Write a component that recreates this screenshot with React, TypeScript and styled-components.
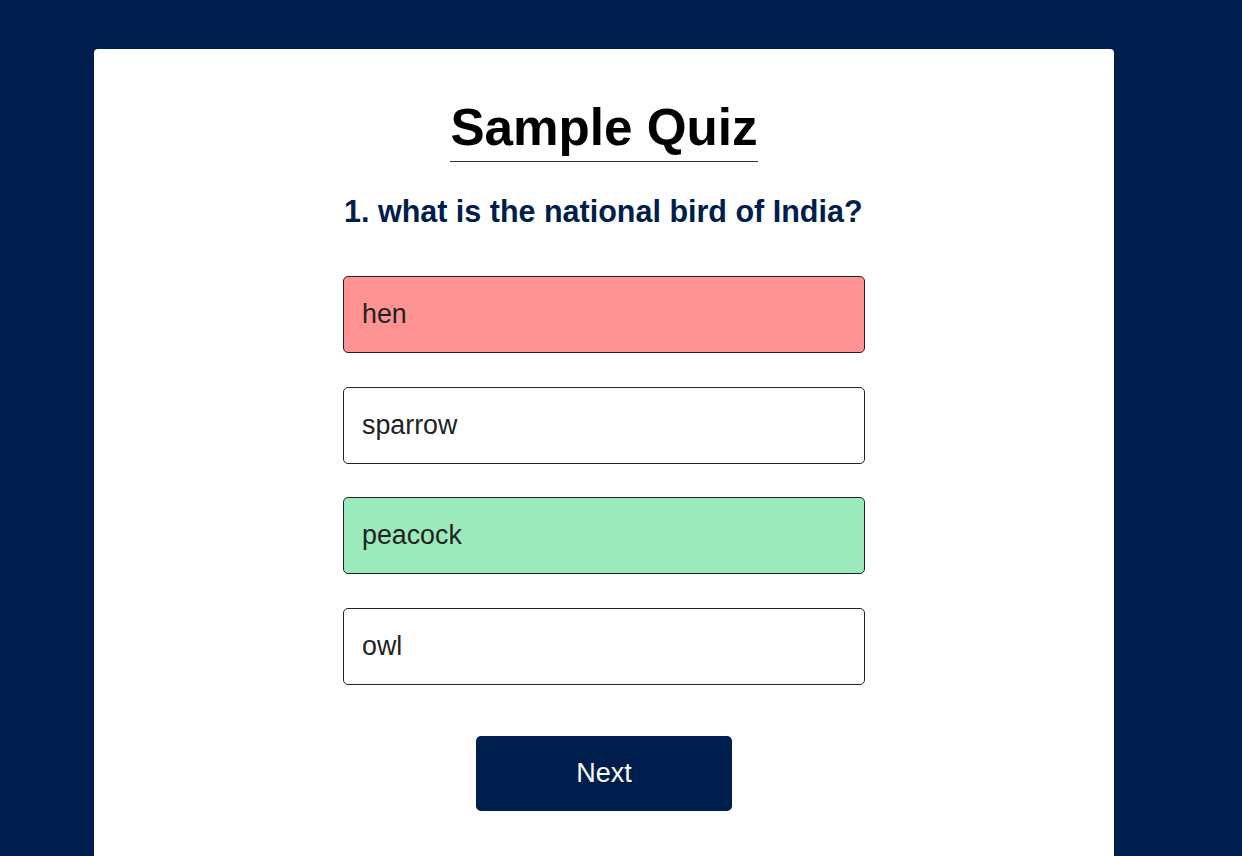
import React from "react";
import styled, { createGlobalStyle } from "styled-components";

const GlobalStyle = createGlobalStyle`
  html, body {
    margin: 0;
    padding: 0;
    background: #001e4d;
    font-family: "Liberation Sans", Arial, sans-serif;
  }
  * { box-sizing: border-box; }
`;

const Page = styled.div`
  padding: 49px 0 0 94px;
  height: 856px;
  overflow: hidden;
`;

const Card = styled.main`
  width: 1020px;
  min-height: 807px;
  background: #ffffff;
  border-radius: 4px 4px 0 0;
  padding-top: 49px;
  display: flex;
  flex-direction: column;
  align-items: center;
`;

const Title = styled.h1`
  display: inline-block;
  margin: 0;
  font-size: 51.2px;
  line-height: 59px;
  font-weight: 700;
  color: #000;
  padding-bottom: 4px;
  border-bottom: 1px solid #2a2f3d;
`;

const Quiz = styled.section`
  width: 522px;
  margin-top: 32px;
  display: flex;
  flex-direction: column;
`;

const Question = styled.h2`
  margin: 0;
  padding-left: 1px;
  font-size: 30.5px;
  line-height: 35px;
  font-weight: 700;
  color: #001e4d;
`;

const Answers = styled.div`
  margin-top: 47px;
  display: flex;
  flex-direction: column;
  gap: 33.7px;
`;

type State = "wrong" | "right" | "none";

const bg: Record<State, string> = {
  wrong: "#ff9393",
  right: "#9aeabc",
  none: "#ffffff",
};

const Answer = styled.button<{ $state: State }>`
  display: flex;
  align-items: center;
  height: 77px;
  width: 100%;
  padding: 0 18px;
  font-family: "Liberation Sans", Arial, sans-serif;
  font-size: 26.8px;
  color: #222;
  text-align: left;
  background: ${(p) => bg[p.$state]};
  border: 1px solid #222;
  border-radius: 5px;
  cursor: pointer;
`;

const NextButton = styled.button`
  align-self: center;
  margin-top: 51px;
  width: 256px;
  height: 75px;
  border: none;
  border-radius: 5px;
  background: #001e4d;
  color: #fff;
  font-family: "Liberation Sans", Arial, sans-serif;
  font-size: 27px;
  cursor: pointer;
`;

const answers: { text: string; state: State }[] = [
  { text: "hen", state: "wrong" },
  { text: "sparrow", state: "none" },
  { text: "peacock", state: "right" },
  { text: "owl", state: "none" },
];

export default function App() {
  return (
    <>
      <GlobalStyle />
      <Page>
        <Card>
          <Title>Sample Quiz</Title>
          <Quiz>
            <Question>1. what is the national bird of India?</Question>
            <Answers>
              {answers.map((a) => (
                <Answer key={a.text} $state={a.state}>
                  {a.text}
                </Answer>
              ))}
            </Answers>
            <NextButton>Next</NextButton>
          </Quiz>
        </Card>
      </Page>
    </>
  );
}
